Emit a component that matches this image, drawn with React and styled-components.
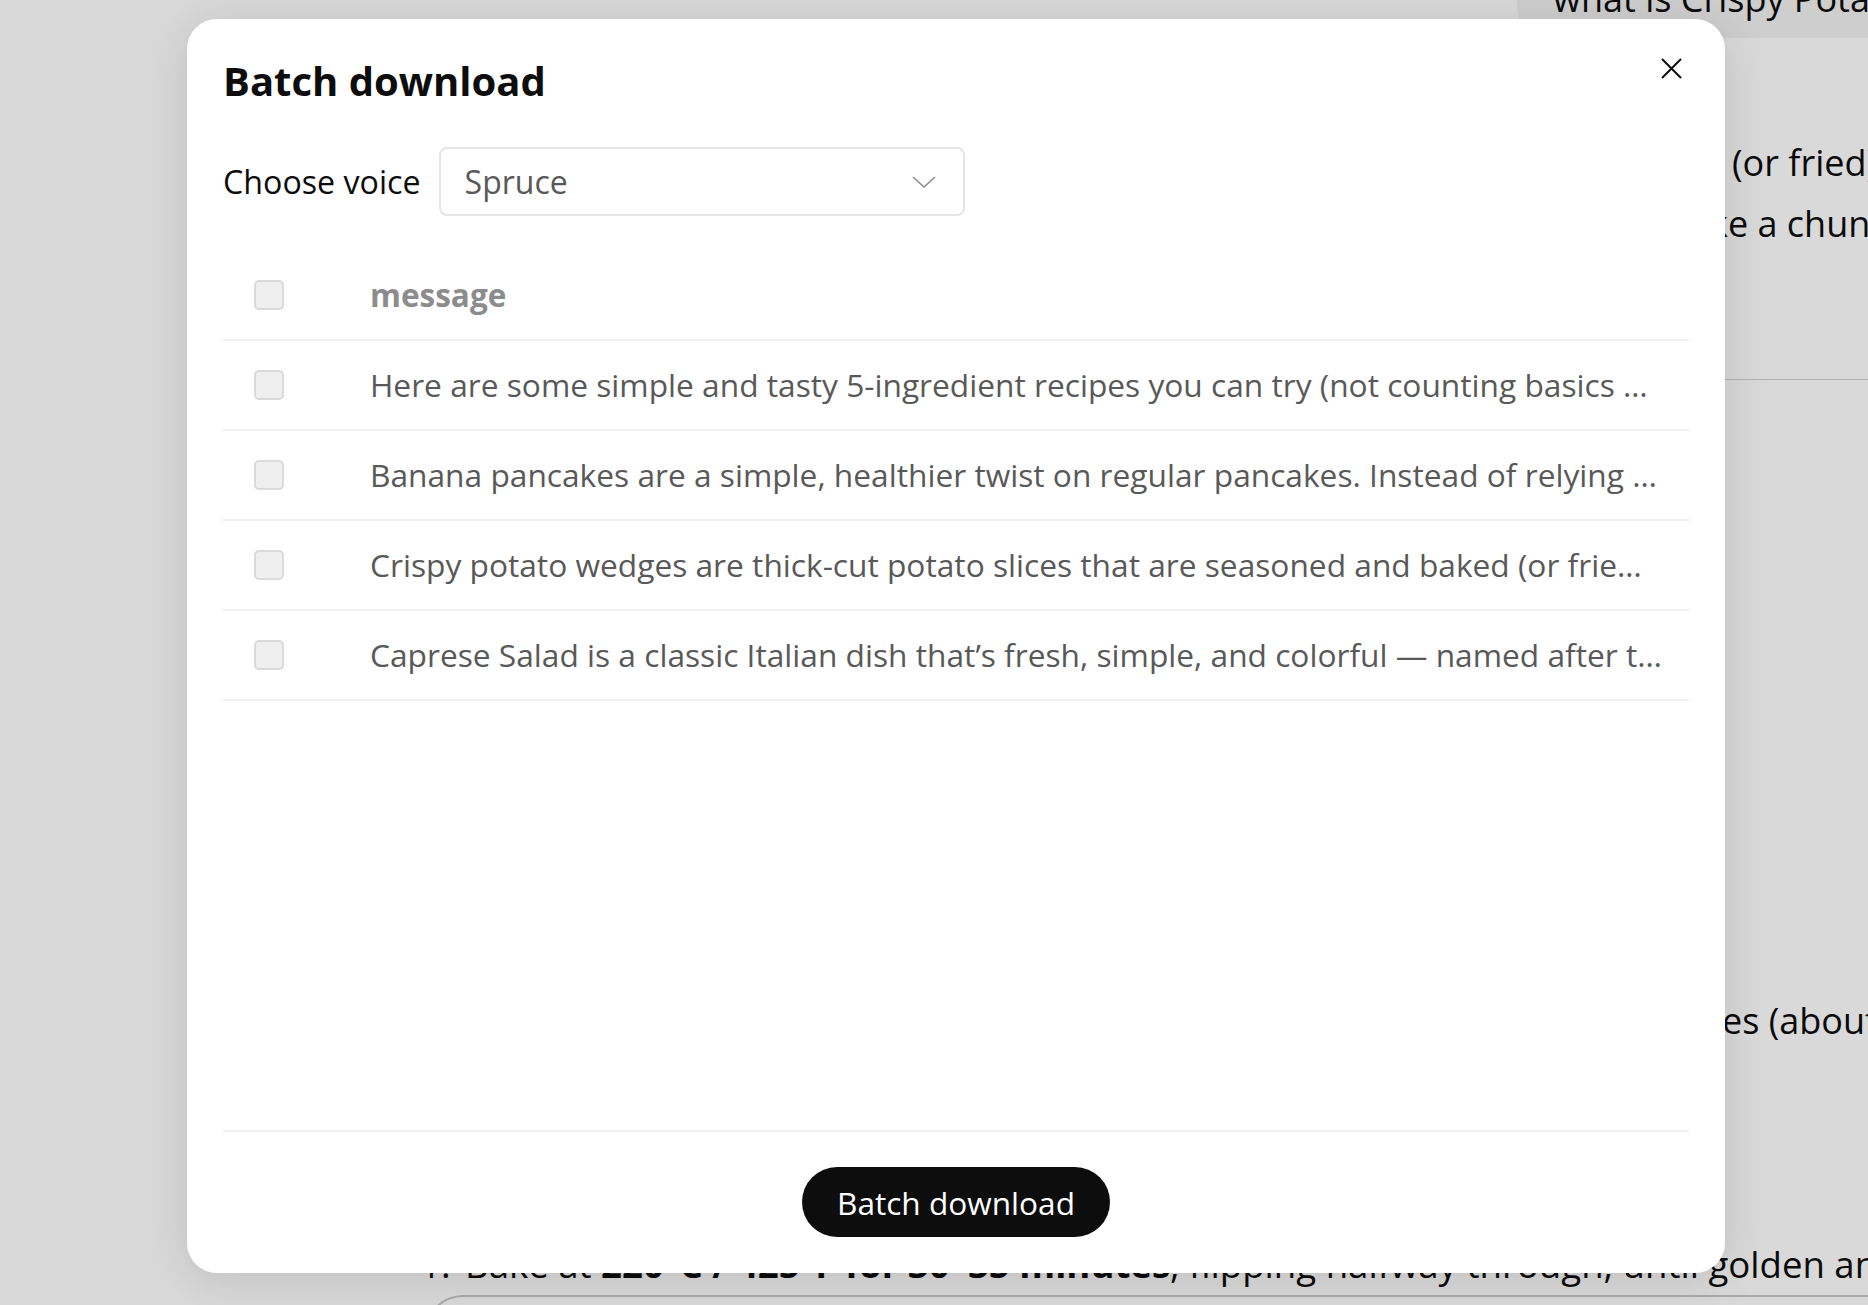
import React from 'react'
import styled, { createGlobalStyle } from 'styled-components'

const GlobalStyle = createGlobalStyle`
  * { box-sizing: border-box; }
  html, body {
    margin: 0;
    padding: 0;
  }
  body {
    font-family: 'Open Sans', 'Noto Sans', sans-serif;
    color: #0d0d0d;
    overflow: hidden;
  }
`

const Screen = styled.div`
  position: relative;
  width: 100vw;
  height: 100vh;
  overflow: hidden;
  background: #ffffff;
`

/* chat page behind the dialog */

const Thread = styled.div`
  padding-left: 420px;
  display: flex;
  flex-direction: column;
  font-size: 36px;
  color: #0d0d0d;
`

const BubbleRow = styled.div`
  display: flex;
  padding-left: 1097px;
  margin-top: -42px;
`

const UserBubble = styled.div`
  background: #f2f2f2;
  border-radius: 32px;
  padding: 20px 40px 18px 36px;
  line-height: 42px;
  white-space: nowrap;
`

const Line = styled.div`
  padding-left: ${p => p.$indent || 0}px;
  margin-top: ${p => p.$gap || 0}px;
  line-height: ${p => p.$lh || 61}px;
  white-space: nowrap;
`

const ListLine = styled(Line)`
  font-size: 36.6px;
`

const Rule = styled.div`
  margin-top: ${p => p.$gap}px;
  height: 1px;
  width: 1600px;
  background: #d2d2d2;
`

const Num = styled.span`
  display: inline-block;
  width: 45px;
`

const Composer = styled.div`
  margin-top: 3px;
  margin-left: 5px;
  width: 1500px;
  height: 120px;
  border: 2px solid #c8c8c8;
  border-radius: 38px;
  background: #ffffff;
`

const Overlay = styled.div`
  position: absolute;
  inset: 0;
  background: rgba(0, 0, 0, 0.15);
`

/* dialog */

const Modal = styled.div`
  position: absolute;
  left: 187px;
  top: 19px;
  width: 1538px;
  height: 1254px;
  background: #ffffff;
  border-radius: 30px;
  padding: 34px 36px 36px;
  display: flex;
  flex-direction: column;
  box-shadow: 0 6px 48px rgba(0, 0, 0, 0.12);
`

const CloseButton = styled.button`
  position: absolute;
  top: 39px;
  right: 43px;
  width: 21px;
  height: 21px;
  padding: 0;
  border: none;
  background: none;
  cursor: pointer;
  display: flex;
`

const Title = styled.h2`
  margin: 0;
  font-size: 40px;
  line-height: 56px;
  font-weight: 700;
  color: #0d0d0d;
`

const VoiceRow = styled.div`
  margin-top: 38px;
  display: flex;
  align-items: center;
  gap: 18px;
`

const Label = styled.span`
  font-size: 32.2px;
  line-height: 42px;
  color: #0d0d0d;
`

const Select = styled.div`
  width: 526px;
  height: 69px;
  border: 2px solid #e5e5e5;
  border-radius: 8px;
  padding: 0 27px 0 24px;
  display: flex;
  align-items: center;
  justify-content: space-between;
  font-size: 32px;
  line-height: 42px;
  color: #595959;
  cursor: pointer;
`

const Table = styled.div`
  margin-top: 35px;
  flex: 1;
  min-height: 0;
  display: flex;
  flex-direction: column;
`

const Row = styled.div`
  display: grid;
  grid-template-columns: 147px 1fr;
  align-items: center;
  height: 90px;
  border-bottom: 2px solid #f0f0f0;
`

const CheckCell = styled.div`
  padding-left: 31px;
  display: flex;
`

const Checkbox = styled.span`
  width: 30px;
  height: 30px;
  border: 2px solid #dadada;
  border-radius: 5px;
  background: #efefef;
`

const Cell = styled.div`
  padding-right: 20px;
  font-size: ${p => (p.$head ? 31.5 : 31.7)}px;
  line-height: 42px;
  font-weight: ${p => (p.$head ? 700 : 400)};
  color: ${p => (p.$head ? '#8c8c8c' : '#595959')};
  white-space: nowrap;
  overflow: hidden;
  text-overflow: ellipsis;
`

const Footer = styled.div`
  border-top: 2px solid #f0f0f0;
  padding-top: 35px;
  display: flex;
  justify-content: center;
`

const PrimaryButton = styled.button`
  width: 308px;
  height: 70px;
  border: none;
  border-radius: 35px;
  background: #0d0d0d;
  color: #ffffff;
  font-family: inherit;
  font-size: 31.6px;
  cursor: pointer;
`

const messages = [
  'Here are some simple and tasty 5-ingredient recipes you can try (not counting basics …',
  'Banana pancakes are a simple, healthier twist on regular pancakes. Instead of relying …',
  'Crispy potato wedges are thick-cut potato slices that are seasoned and baked (or frie…',
  'Caprese Salad is a classic Italian dish that’s fresh, simple, and colorful — named after t…',
]

const Chevron = () => (
  <svg width="24" height="12" viewBox="0 0 24 12" fill="none">
    <polyline points="1,1 12,11 23,1" stroke="#8c8c8c" strokeWidth="1.6" />
  </svg>
)

const CloseIcon = () => (
  <svg width="21" height="21" viewBox="0 0 21 21" fill="none">
    <path d="M1 1L20 20M20 1L1 20" stroke="#0d0d0d" strokeWidth="2" />
  </svg>
)

export default function App() {
  return (
    <Screen>
      <GlobalStyle />
      <Thread>
        <BubbleRow>
          <UserBubble>what is Crispy Potato Wedges?</UserBubble>
        </BubbleRow>
        <Line $gap={94} $indent={1312}>(or fried) until crispy outside</Line>
        <Line $indent={1289}>ke a chunky, rustic fry.</Line>
        <Rule $gap={125} />
        <Line $gap={610} $indent={1302}>es (about 1 inch thick)</Line>
        <ListLine $gap={185} $lh={56}>
          <Num>1.</Num>Bake at <b>220°C / 425°F for 30–35 minutes</b>, flipping halfway through, until golden and crispy.
        </ListLine>
        <Composer />
      </Thread>
      <Overlay />
      <Modal>
        <CloseButton aria-label="Close">
          <CloseIcon />
        </CloseButton>
        <Title>Batch download</Title>
        <VoiceRow>
          <Label>Choose voice</Label>
          <Select>
            <span>Spruce</span>
            <Chevron />
          </Select>
        </VoiceRow>
        <Table>
          <Row>
            <CheckCell><Checkbox /></CheckCell>
            <Cell $head>message</Cell>
          </Row>
          {messages.map((m, i) => (
            <Row key={i}>
              <CheckCell><Checkbox /></CheckCell>
              <Cell>{m}</Cell>
            </Row>
          ))}
        </Table>
        <Footer>
          <PrimaryButton>Batch download</PrimaryButton>
        </Footer>
      </Modal>
    </Screen>
  )
}
